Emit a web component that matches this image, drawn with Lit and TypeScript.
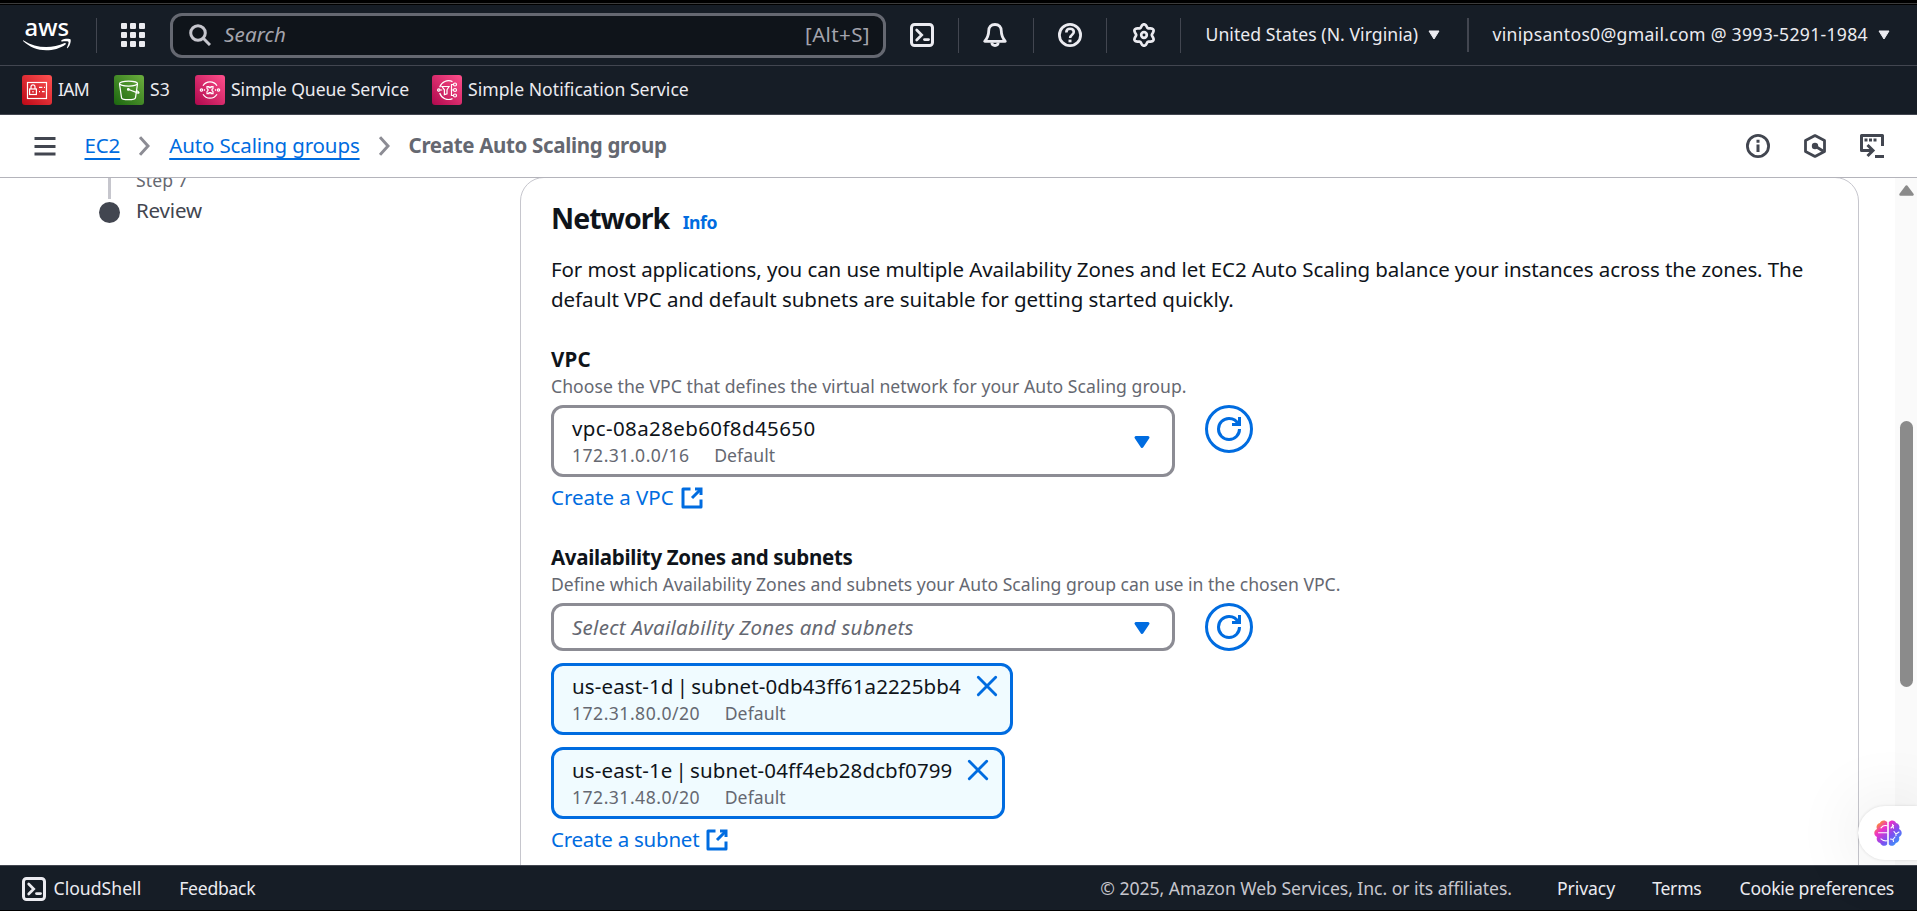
import { LitElement, html, svg, css } from "lit";
import { customElement } from "lit/decorators.js";

const caret = html`<svg class="caret" viewBox="0 0 12 10"><path d="M1 1h10l-5 8z" fill="currentColor" stroke="currentColor" stroke-width="1" stroke-linejoin="round"/></svg>`;

const shell = html`<svg class="i24" viewBox="0 0 24 24" fill="none" stroke="currentColor" stroke-width="3">
  <rect x="1.5" y="1.5" width="21" height="21" rx="3"/>
  <path d="M6.7 7l5 5-5 5" stroke-width="2.7" stroke-linecap="round" stroke-linejoin="miter"/><path d="M14.5 16.6h4" stroke-width="2.8" stroke-linecap="round"/></svg>`;

const bigCaret = html`<svg class="i24 blue drop" viewBox="0 0 16 16"><path d="M4 5h8l-4 6-4-6z" fill="currentColor" stroke="currentColor" stroke-width="2" stroke-linejoin="round"/></svg>`;

const refresh = html`<button class="refresh" aria-label="Refresh"><svg class="i24" viewBox="0 0 16 16" fill="none" stroke="currentColor" stroke-width="2">
  <path d="M10 5h5V0"/><path d="M15 8a6.957 6.957 0 0 1-7 7 6.957 6.957 0 0 1-7-7 6.957 6.957 0 0 1 7-7 6.87 6.87 0 0 1 6.3 4"/></svg></button>`;

const external = html`<svg class="i24" viewBox="0 0 16 16" fill="none" stroke="currentColor" stroke-width="2">
  <path d="M10 2h4v4"/><path d="M8 8l6-6"/><path d="M14 9.05V14H2V2h5" stroke-linejoin="round"/></svg>`;

const close = html`<svg class="i24 blue" viewBox="0 0 16 16" fill="none" stroke="currentColor" stroke-width="1.9"><path d="M2.2 2.2l11.6 11.6M13.8 2.2L2.2 13.8" stroke-linecap="round"/></svg>`;

const chevron = html`<svg class="chev" viewBox="0 0 11 20" fill="none" stroke="#8c8c94" stroke-width="3"><path d="M1 1.2l8 8.8-8 8.8"/></svg>`;

/** Six-lobed outline of the settings gear, with one lobe pointing up. */
const gearPath = (() => {
  const pts: string[] = [];
  for (let a = 0; a < 360; a += 5) {
    const t = (a * Math.PI) / 180;
    const r = 9.3 - 1.5 * Math.cos(6 * t);
    pts.push(`${(12 + r * Math.cos(t)).toFixed(2)} ${(12 + r * Math.sin(t)).toFixed(2)}`);
  }
  return `M${pts.join("L")}Z`;
})();

const serviceArt = {
  iam: svg`<rect x="5.5" y="7.5" width="19" height="16"/><rect x="7.6" y="14" width="6.8" height="5.5"/><path d="M9 14v-2.2a2 2 0 0 1 4 0V14M11 16v1.6M17 12.4h3.4M22 12.4h1M17 16.6h1M20 16.6h2.6"/>`,
  s3: svg`<ellipse cx="14.5" cy="8.6" rx="9" ry="2.5"/><path d="M5.5 8.8l2 13.8c.2 2.8 13.6 2.8 14 0l2-13.8M14.8 14.5l9.2 3.6c1.5.3 1.2-1-1-2.4"/><circle cx="14.3" cy="14.4" r=".8"/>`,
  sqs: svg`<path d="M8 10.8a8.2 8.2 0 0 1 14 0M8 19.2a8.2 8.2 0 0 0 14 0"/><path d="M12 11.6h2v1h2v-1h2v2l-1 1v1l1 1v2h-2v-1h-2v1h-2v-2l1-1v-1l-1-1z"/><circle cx="6.5" cy="15" r="1.2"/><circle cx="23.5" cy="15" r="1.2"/><path d="M9.5 14.2v1.6M20.5 14.2v1.6"/>`,
  sns: svg`<path d="M20.5 6.6a9.3 9.3 0 0 0-12.8 5.6M20.5 23.6a9.3 9.3 0 0 1-12.8-5.6M10 11.5h7l-2 3.3v4l-2.6.8v-4.8z"/><circle cx="6.8" cy="15" r="1.2"/><circle cx="23" cy="9.5" r="1.5"/><circle cx="23" cy="15" r="1.5"/><circle cx="23" cy="20.5" r="1.5"/><path d="M8.2 15h2M21.4 15h-2.6M21.4 9.5h-1.900v11h1.900"/>`,
};

const service = (kind: keyof typeof serviceArt, label: string) => html`
  <a class="svc ${kind}"><span class="tile"><svg viewBox="0 0 30 30" fill="none" stroke="#fff" stroke-width="1.2">${serviceArt[kind]}</svg></span><span class="label">${label}</span></a>`;

const token = (name: string, cidr: string) => html`
  <div class="token"><div><div class="opt">${name}</div><div class="tags"><span class="cidr">${cidr}</span><span class="def">Default</span></div></div>${close}</div>`;

@customElement("app-root")
export class AppRoot extends LitElement {
  static styles = css`
    :host { display: flex; flex-direction: column; width: 1917px; height: 911px; overflow: hidden; box-sizing: border-box; background: #fff; color: #0f141a;
      font: 400 20.5px/30px "Noto Sans", "Open Sans", sans-serif; position: relative; white-space: nowrap; }
    * { box-sizing: border-box; }
    svg { display: block; flex: none; }
    .i24 { width: 24px; height: 24px; }
    .blue { color: #006ce0; }
    .drop { margin-top: 2px; }
    .edge { flex: none; height: 5px; background: linear-gradient(#000 3px, #3c3c3c 3px, #3c3c3c 4px, #000 4px); }

    .top { flex: none; height: 61px; display: flex; align-items: center; padding-left: 23px; background: #161d26; border-bottom: 1px solid #424650; color: #ebebf0; font-size: 17.6px; }
    .logo { width: 48px; height: 31px; margin-right: 25px; overflow: visible; }
    .sep { width: 1px; height: 35px; background: #424650; flex: none; }
    .apps { margin: 0 25px 0 24px; width: 24px; height: 24px; }
    .search { flex: none; width: 716px; height: 45px; margin-right: 24px; border: 3px solid #656871; border-radius: 12px; background: #0f141a; display: flex; align-items: center; padding: 0 13px 0 16px; font-size: 20.5px; color: #a4a4ad; }
    .search svg { margin-right: 13px; }
    .search em { flex: 1; letter-spacing: .15px; padding-bottom: 2px; }
    .search kbd { font: inherit; letter-spacing: .39px; padding-bottom: 2px; }
    .m24 { margin-left: 24px; } .m25 { margin-left: 25px; } .m24h { margin-left: 24px; margin-right: 1px; }
    .region { width: 222px; margin-left: 24.5px; letter-spacing: .05px; padding-bottom: 2px; }
    .acct { width: 385px; margin-left: 24px; letter-spacing: .3px; padding-bottom: 2px; }
    .caret { width: 12px; height: 10px; }
    .sep2 { width: 2px; height: 34px; background: #424650; margin-left: 27px; }

    .services { flex: none; height: 49px; display: flex; align-items: center; padding-left: 22px; background: #161d26; border-bottom: 1px solid #424650; color: #ebebf0; font-size: 17.6px; }
    .svc { display: flex; align-items: center; gap: 6px; }
    .label { padding-bottom: 2px; }
    .tile { width: 30px; height: 30px; border-radius: 3px; background: linear-gradient(45deg, #b0084d, #ff4f8b); }
    .iam { width: 92px; } .iam .tile { background: linear-gradient(45deg, #bd0816, #ff5252); } .iam .label { letter-spacing: -.7px; }
    .s3 { width: 81px; } .s3 .tile { background: linear-gradient(45deg, #1b660f, #6cae3e); }
    .sqs { width: 237px; } .sqs .label { letter-spacing: -.05px; }
    .sns .label { letter-spacing: .03px; }

    .crumbs { flex: none; height: 63px; display: flex; align-items: center; padding: 0 33px 0 34px; border-bottom: 1px solid #b4b4bb; }
    .menu { width: 22px; height: 19px; margin: 0 28.5px 0 0; }
    .crumbs a { margin-bottom: 1.500px; color: #006ce0; text-decoration: underline 2px; text-underline-offset: 4.5px; text-decoration-skip-ink: none; letter-spacing: -.13px; }
    .chev { width: 11px; height: 20px; margin: 0 19px; }
    .crumbs b { margin-bottom: 1.500px; color: #656871; letter-spacing: -.33px; flex: 1; }
    .tools { display: flex; gap: 33px; color: #424650; }

    .body { flex: none; height: 687px; display: flex; overflow: hidden; }
    .steps { width: 520px; display: flex; padding-left: 99px; gap: 16px; color: #424650; }
    .rail { width: 21px; display: flex; flex-direction: column; align-items: center; gap: 3px; }
    .rail i { width: 3px; height: 21px; background: #c6c6cd; }
    .rail b { width: 21px; height: 21px; border-radius: 50%; background: #424650; }
    .stepname { margin-top: -10px; }
    .stepname small { display: block; font-size: 17.6px; line-height: 24px; color: #656871; margin-bottom: 3px; letter-spacing: .1px; }
    .stepname span { letter-spacing: -.15px; }

    .card { width: 1339px; height: 800px; margin-top: -1px; border: 1px solid #c6c6cd; border-radius: 24px; padding: 22px 30px; flex: none; }
    .head { display: flex; align-items: baseline; gap: 13.5px; height: 36px; line-height: 36px; margin-bottom: 18px; }
    h2 { margin: 0; font-size: 28.5px; line-height: 36px; letter-spacing: -1px; }
    .info { font-size: 17.6px; font-weight: 700; color: #006ce0; letter-spacing: -.45px; }
    p { margin: 0 0 30px; letter-spacing: -.09px; }
    p span { letter-spacing: -.04px; }
    .label2 { font-weight: 700; }
    .vpc .label2 { letter-spacing: .25px; }
    .az .label2 { letter-spacing: -.32px; }
    .desc { font-size: 17.6px; line-height: 25px; height: 25px; margin-bottom: 6px; color: #656871; letter-spacing: .045px; }
    .az .desc { letter-spacing: -.008px; }
    .row { display: flex; gap: 30px; align-items: flex-start; }
    .select { width: 624px; height: 48px; border: 3px solid #8c8c94; border-radius: 12px; padding: 0 18px; display: flex; align-items: center; justify-content: space-between; }
    .select.tall { height: 72px; padding-bottom: 2px; }
    .tall .drop { margin-top: 3px; }
    .vpcid { letter-spacing: .38px; }
    .ph { color: #656871; letter-spacing: .27px; padding-bottom: 1px; }
    .tags { display: flex; gap: 25px; font-size: 17.6px; line-height: 24px; color: #656871; }
    .cidr { letter-spacing: .48px; margin-right: -.4px; }
    .def { letter-spacing: .1px; }
    .refresh { width: 48px; height: 48px; border: 3px solid #006ce0; border-radius: 50%; background: #fff; color: #006ce0; padding: 0; display: flex; align-items: center; justify-content: center; }
    .link { display: flex; gap: 6px; color: #006ce0; margin-top: 5px; letter-spacing: -.02px; }
    .link svg { margin-top: 4px; }
    .vpc { margin-bottom: 30px; }
    .az .link { letter-spacing: -.24px; }
    .token { width: fit-content; margin-top: 12px; border: 3px solid #006ce0; border-radius: 12px; background: #f0fbff; padding: 5px 11.5px 7px 18px; display: flex; gap: 14px; }
    .token svg { margin-top: 3px; }
    .opt { word-spacing: -2.4px; letter-spacing: .13px; }

    .track { width: 22px; margin-left: auto; background: #fafafa; display: flex; flex-direction: column; align-items: center; padding: 6.5px 0 0 1px; gap: 225px; }
    .thumb { width: 13px; height: 266px; border-radius: 7px; background: #8b8b8b; }
    .pill { position: absolute; right: 0; top: 806px; width: 59px; height: 54px; border-radius: 27px 0 0 27px; background: #fff; box-shadow: 0 0 70px rgba(0,0,0,.12), 0 0 3px rgba(0,0,0,.12); padding: 14px 0 0 16px; }

    .foot { flex: none; height: 46px; display: flex; align-items: center; padding: 0 23px 0 22px; background: #161d26; border-top: 1px solid #424650; border-bottom: 1px solid #000; color: #ebebf0; font-size: 17.6px; }
    .foot svg { margin-top: 2px; }
    .cs { margin: 0 38px 0 7.5px; letter-spacing: .02px; }
    .fb { letter-spacing: -.27px; padding-bottom: 1px; }
    .copy { margin-left: auto; color: #c6c6cd; letter-spacing: -.05px; margin-right: 45px; }
    .priv { letter-spacing: -.08px; margin-right: 37px; }
    .terms { letter-spacing: -.25px; margin-right: 38px; }
    .cookie { letter-spacing: -.25px; }
    .copy, .priv, .terms, .cookie { padding-bottom: 1px; }
  `;

  render() {
    return html`
      <div class="edge"></div>
      <header class="top">
        <svg class="logo" viewBox="0 0 48 31" fill="#fff"><text x="1.5" y="16" font-size="24" font-weight="500" textLength="44.5" lengthAdjust="spacingAndGlyphs">aws</text>
          <path d="M.6 20.4c7 4.6 14.6 6.7 22.6 6.7 6.300 0 12.6-1.400 18.5-4 .9-.4 1.700.6.8 1.300-5.300 4-12.400 5.800-19.300 5.800C14.500 30.200 6.500 27 .3 21.200c-.5-.5-.2-1.100.3-.8z"/>
          <path d="M38.500 20.200c3-1.900 8.300-1.600 9-.8.700.9-.2 6.300-2.900 8.600-.5.400-.9.200-.7-.3.700-1.700 2.200-5 1.500-5.900-.7-.9-4.800-.5-6.600-.3-.6.100-.8-.9-.3-1.300z"/></svg>
        <div class="sep"></div>
        <svg class="apps" viewBox="0 0 24 24" fill="#ebebf0">${[0, 9, 18].map((y) => [0, 9, 18].map((x) => svg`<rect x=${x} y=${y} width="6" height="6" rx="1"/>`))}</svg>
        <div class="search"><svg width="22" height="22" viewBox="0 0 22 22" fill="none" stroke="#c6c6cd" stroke-width="3"><circle cx="9" cy="9" r="7.3"/><path d="M14 14l7 7"/></svg><em>Search</em><kbd>[Alt+S]</kbd></div>
        ${shell}
        <div class="sep m24"></div>
        <svg class="i24 m24h" viewBox="0 0 24 24" fill="none" stroke="currentColor" stroke-width="2.8" stroke-linejoin="round"><path d="M12 1.500c-4 0-6.300 2.600-6.300 6.500 0 4.500-1.200 7-4 10.300h20.600c-2.800-3.300-4-5.800-4-10.300 0-3.900-2.300-6.500-6.300-6.500z"/><path d="M8.800 19.500c.2 4 6.200 4 6.400 0"/></svg>
        <div class="sep m25"></div>
        <svg class="i24 m24" viewBox="0 0 24 24" fill="none" stroke="currentColor" stroke-width="2.8"><circle cx="12" cy="12" r="10.6"/><path d="M8.300 9.500c0-2.400 1.700-3.700 3.800-3.700s3.700 1.300 3.700 3.300c0 2.700-3.700 2.600-3.700 6" stroke-width="2.6"/><path d="M12 16.600v2.700" stroke-width="3"/></svg>
        <div class="sep m24"></div>
        <svg class="i24 m25" viewBox="0 0 24 24" fill="none" stroke="currentColor" stroke-width="2.7"><path d=${gearPath} stroke-linejoin="round"/><circle cx="12" cy="12" r="2.8"/></svg>
        <div class="sep m24"></div>
        <span class="region">United States (N. Virginia)</span>${caret}
        <div class="sep2"></div>
        <span class="acct">vinipsantos0@gmail.com @ 3993-5291-1984</span>${caret}
      </header>
      <nav class="services">${service("iam", "IAM")}${service("s3", "S3")}${service("sqs", "Simple Queue Service")}${service("sns", "Simple Notification Service")}</nav>
      <nav class="crumbs">
        <svg class="menu" viewBox="0 0 22 19" fill="#424650"><path d="M.5 0h21v3h-21zM.5 8h21v3h-21zM.5 15.500h21v3h-21z"/></svg>
        <a>EC2</a>${chevron}<a>Auto Scaling groups</a>${chevron}<b>Create Auto Scaling group</b>
        <div class="tools">
          <svg class="i24" viewBox="0 0 24 24" fill="none" stroke="currentColor" stroke-width="2.8"><circle cx="12" cy="12" r="10.6"/><path d="M12 5.800v3M12 10.500v7.500" stroke-width="3"/></svg>
          <svg class="i24" viewBox="0 0 24 24" fill="none" stroke="currentColor" stroke-width="2.8"><path d="M12 1.600l9.500 5v10.800l-9.500 5-9.500-5V6.600z" stroke-linejoin="round"/><circle cx="12" cy="12" r="3.2" fill="currentColor" stroke="none"/><path d="M12 12l8 5"/></svg>
          <svg class="i24" viewBox="0 0 24 24" fill="none" stroke="currentColor" stroke-width="3"><path d="M22.500 12V1.500h-21v15H13" stroke-linejoin="round"/><path d="M7.500 11l5.500 5.500L7.500 22"/><path d="M15 22.500h9"/><path d="M4.500 6h3M9 6h3M13.500 6h3" stroke-width="3.2"/></svg>
        </div>
      </nav>
      <main class="body">
        <aside class="steps"><div class="rail"><i></i><b></b></div><div class="stepname"><small>Step 7</small><span>Review</span></div></aside>
        <section class="card">
          <div class="head"><h2>Network</h2><a class="info">Info</a></div>
          <p>For most applications, you can use multiple Availability Zones and let EC2 Auto Scaling balance your instances across the zones. The<br><span>default VPC and default subnets are suitable for getting started quickly.</span></p>
          <div class="vpc">
            <div class="label2">VPC</div><div class="desc">Choose the VPC that defines the virtual network for your Auto Scaling group.</div>
            <div class="row"><div class="select tall"><div><div class="vpcid">vpc-08a28eb60f8d45650</div><div class="tags"><span class="cidr">172.31.0.0/16</span><span class="def">Default</span></div></div>${bigCaret}</div>${refresh}</div>
            <a class="link">Create a VPC ${external}</a>
          </div>
          <div class="az">
            <div class="label2">Availability Zones and subnets</div><div class="desc">Define which Availability Zones and subnets your Auto Scaling group can use in the chosen VPC.</div>
            <div class="row"><div class="select"><em class="ph">Select Availability Zones and subnets</em>${bigCaret}</div>${refresh}</div>
            ${token("us-east-1d | subnet-0db43ff61a2225bb4", "172.31.80.0/20")}
            ${token("us-east-1e | subnet-04ff4eb28dcbf0799", "172.31.48.0/20")}
            <a class="link">Create a subnet ${external}</a>
          </div>
        </section>
        <div class="track"><svg width="15" height="11" viewBox="0 0 15 11"><path d="M7.500 1.500L13.500 9.500h-12z" fill="#8b8b8b" stroke="#8b8b8b" stroke-width="2.5" stroke-linejoin="round"/></svg><div class="thumb"></div></div>
      </main>
      <footer class="foot">${shell}<span class="cs">CloudShell</span><span class="fb">Feedback</span><span class="copy">© 2025, Amazon Web Services, Inc. or its affiliates.</span><span class="priv">Privacy</span><span class="terms">Terms</span><span class="cookie">Cookie preferences</span></footer>
      <div class="pill"><svg width="28" height="26" viewBox="0 0 28 26">
        <defs><linearGradient id="g" x1="0" y1="0" x2="1" y2="1"><stop offset=".05" stop-color="#ffb000"/><stop offset=".32" stop-color="#ee30c8"/><stop offset=".6" stop-color="#7c50f0"/><stop offset="1" stop-color="#20b0ff"/></linearGradient></defs>
        <path d="M13.200 2C11-.6 6.500.2 6 3 3 3.600 1.800 6.500 3 9-.6 10.500-.6 15.500 3 17c-1 3 .5 5.500 3.200 6 1.200 3.400 5.400 3.600 7 1.200zM14.800 2C17-.6 21.500.2 22 3c3 .6 4.200 3.500 3 6 3.600 1.500 3.600 6.500 0 8 1 3-.5 5.500-3.200 6-1.200 3.400-5.400 3.600-7 1.200z" fill="url(#g)"/>
        <path d="M4.500 12.800h8.700M13 5.800c-3-.8-4.500.2-6 2M13 20.800c-3 .6-4.500-.6-6-2M17 8l2.500-2.500M19.500 8.200l-1-3.700M20 11.500l2 2.500 3-2M22 14v1.500M16.500 19l2.500.5 2-2.500M19 19.500l.5 2" fill="none" stroke="#fff" stroke-width="1.1" stroke-linecap="round"/></svg></div>
    `;
  }
}
